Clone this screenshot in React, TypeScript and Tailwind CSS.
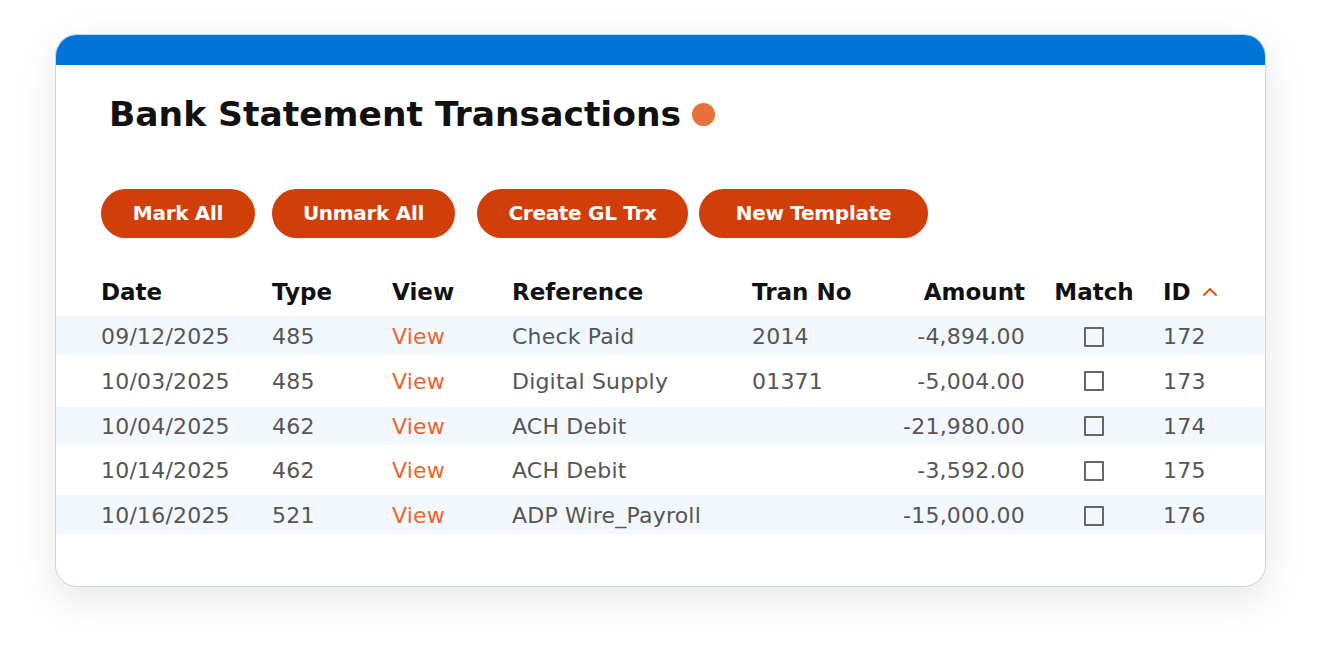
import React from "react";
import { ChevronUp } from "lucide-react";

type Txn = {
  date: string;
  type: string;
  reference: string;
  tranNo: string;
  amount: string;
  id: string;
};

const rows: Txn[] = [
  { date: "09/12/2025", type: "485", reference: "Check Paid", tranNo: "2014", amount: "-4,894.00", id: "172" },
  { date: "10/03/2025", type: "485", reference: "Digital Supply", tranNo: "01371", amount: "-5,004.00", id: "173" },
  { date: "10/04/2025", type: "462", reference: "ACH Debit", tranNo: "", amount: "-21,980.00", id: "174" },
  { date: "10/14/2025", type: "462", reference: "ACH Debit", tranNo: "", amount: "-3,592.00", id: "175" },
  { date: "10/16/2025", type: "521", reference: "ADP Wire_Payroll", tranNo: "", amount: "-15,000.00", id: "176" },
];

const cols = "grid grid-cols-[171px_120px_120px_240px_120px_153px_138px_1fr] items-center pl-[45px]";

const btn = "h-[49px] rounded-full bg-[#d03e0a] text-white text-[20px] font-bold tracking-[-0.3px]";

export default function App() {
  return (
    <div className="min-h-[654px] bg-white pt-[34px] pl-[55px] font-['DejaVu_Sans','Liberation_Sans',sans-serif]">
      <div className="w-[1211px] h-[553px] rounded-[22px] border border-[#b9d8f3] bg-white shadow-[0_12px_40px_rgba(0,0,0,0.10)] overflow-hidden">
        {/* top bar */}
        <div className="h-[30px] bg-[#0273d8]" />

        {/* title */}
        <div className="px-[45px] pt-[32px]">
          <h1 className="flex items-center gap-[11px] pl-[8px] text-[34.5px] leading-none font-bold text-[#111]">
            Bank Statement Transactions
            <span className="inline-block w-[23px] h-[23px] rounded-full bg-[#e8703a]" />
          </h1>

          {/* actions */}
          <div className="mt-[57px] flex items-center">
            <button className={`${btn} w-[154px]`}>Mark All</button>
            <button className={`${btn} ml-[17px] w-[183px]`}>Unmark All</button>
            <button className={`${btn} ml-[22px] w-[211px]`}>Create GL Trx</button>
            <button className={`${btn} ml-[11px] w-[229px]`}>New Template</button>
          </div>
        </div>

        {/* table */}
        <div className="mt-[33px]">
          <div className={`${cols} h-[43px] text-[23px] font-bold text-[#111]`}>
            <div>Date</div>
            <div>Type</div>
            <div>View</div>
            <div>Reference</div>
            <div>Tran No</div>
            <div className="text-right">Amount</div>
            <div className="text-center">Match</div>
            <div className="flex items-center gap-[7px]">
              ID
              <ChevronUp size={24} strokeWidth={2} className="text-[#e0541c]" />
            </div>
          </div>

          <div className="flex flex-col gap-[5.7px] pt-[2.8px]">
            {rows.map((r, i) => (
              <div
                key={r.id}
                className={`${cols} h-[39px] pt-[2px] text-[22px] tracking-[0.2px] text-[#555] ${i % 2 === 0 ? "bg-[#f3f8fe]" : "bg-white"}`}
              >
                <div>{r.date}</div>
                <div>{r.type}</div>
                <div className="text-[#e8672f]">View</div>
                <div>{r.reference}</div>
                <div>{r.tranNo}</div>
                <div className="text-right">{r.amount}</div>
                <div className="flex justify-center">
                  <div className="w-[20px] h-[20px] border-2 border-[#666] rounded-[1px]" />
                </div>
                <div>{r.id}</div>
              </div>
            ))}
          </div>
        </div>
      </div>
    </div>
  );
}
